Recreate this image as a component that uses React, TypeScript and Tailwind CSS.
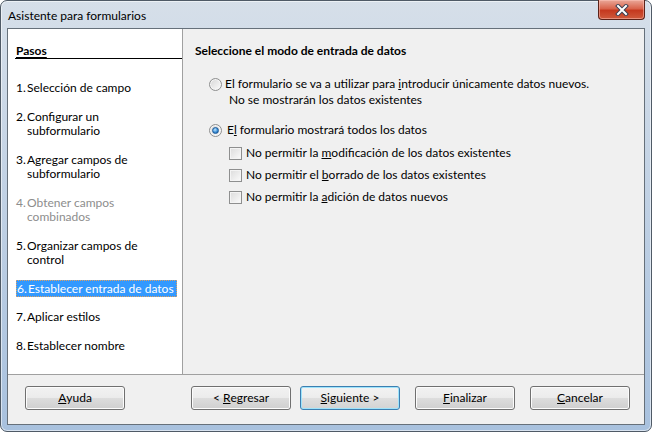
import React from 'react';

const steps = [
  { n: '1.', lines: ['Selección de campo'] },
  { n: '2.', lines: ['Configurar un', 'subformulario'] },
  { n: '3.', lines: ['Agregar campos de', 'subformulario'] },
  { n: '4.', lines: ['Obtener campos', 'combinados'], disabled: true },
  { n: '5.', lines: ['Organizar campos de', 'control'] },
  { n: '6.', lines: ['Establecer entrada de datos'], active: true },
  { n: '7.', lines: ['Aplicar estilos'] },
  { n: '8.', lines: ['Establecer nombre'] },
];

function Radio({ checked }: { checked?: boolean }) {
  return (
    <span className="flex h-[13px] w-[13px] shrink-0 items-center justify-center rounded-full border border-[#8e8f8f] bg-gradient-to-br from-[#d6d6d6] to-[#fdfdfd] shadow-[inset_0_0_0_1px_#f6f6f6]">
      {checked && (
        <span className="h-[7px] w-[7px] rounded-full border border-[#1b5a9a] bg-[radial-gradient(circle_at_40%_35%,#bfe6ff,#3d8fd6_55%,#0f4f93)]" />
      )}
    </span>
  );
}

function Check() {
  return (
    <span className="h-[13px] w-[13px] shrink-0 border border-[#8e8f8f] bg-gradient-to-br from-[#dcdcdc] to-[#fbfbfb] shadow-[inset_0_0_0_1px_#f4f4f4]" />
  );
}

function Btn({ children, primary, ml }: { children: React.ReactNode; primary?: boolean; ml: string }) {
  return (
    <button
      className={`${ml} flex h-[24px] w-[100px] items-center justify-center whitespace-pre rounded-[3px] border text-[12px] leading-[14px] text-black ${
        primary
          ? 'border-[#3c7fb1] bg-[linear-gradient(#f3f3f3,#ececec_50%,#dfdfdf_50%,#d3d3d3)] shadow-[inset_0_0_0_1px_#9ee3fb]'
          : 'border-[#707070] bg-[linear-gradient(#f2f2f2,#ebebeb_50%,#dddddd_50%,#cfcfcf)] shadow-[inset_0_0_0_1px_#fcfcfc]'
      }`}
    >
      {children}
    </button>
  );
}

export default function App() {
  return (
    <div className="flex h-[432px] w-[652px] flex-col rounded-[7px] border border-[#4f5a66] bg-gradient-to-b from-[#d6dfe9] to-[#a8c1de] px-[6px] pb-[6px] font-['Lato',sans-serif] text-[12px] text-black shadow-[inset_0_0_0_1px_rgba(255,255,255,0.55)]">
      {/* Title bar */}
      <div className="flex h-[27px] shrink-0 items-start justify-between">
        <div className="pl-[1px] pt-[7px] leading-[16px]">Asistente para formularios</div>
        <div className="-mt-px flex h-[20px] w-[47px] items-center justify-center rounded-b-[4px] border border-t-0 border-[#5c2218] bg-[linear-gradient(#eaa899,#d9644c_45%,#c5391f_55%,#cf5a3c)] shadow-[inset_0_0_0_1px_rgba(255,200,190,0.5)]">
          <svg width="14" height="12" viewBox="0 0 14 12">
            <path d="M3 2 L11 10 M11 2 L3 10" stroke="#3c3f52" strokeWidth="4" strokeLinecap="square" />
            <path d="M3 2 L11 10 M11 2 L3 10" stroke="#ffffff" strokeWidth="2" strokeLinecap="square" />
          </svg>
        </div>
      </div>

      {/* Client */}
      <div className="flex flex-1 flex-col border border-[#66707a] bg-[#f0f0f0]">
        <div className="flex h-[346px] border-b border-[#a0a0a0]">
          {/* Steps */}
          <div className="w-[175px] border-r border-[#a0a0a0] bg-white pl-[8px] pt-[15px]">
            <div className="-ml-px h-[15px] border-b border-black pl-px font-bold leading-[14px]">
              <span className="underline underline-offset-[2px]">Pasos</span>
            </div>
            <div className="mt-[22px] flex flex-col gap-[14px]">
              {steps.map((s) =>
                s.active ? (
                  <div key={s.n} className="flex">
                    <div className="-mb-px -mt-[2px] flex border border-dotted border-[#e0a060] bg-[#3399ff] pr-[2px] pt-[1px] leading-[14.5px] text-white">
                      <span className="w-[11px] shrink-0">{s.n}</span>
                      <span>{s.lines[0]}</span>
                    </div>
                  </div>
                ) : (
                  <div key={s.n} className={`flex leading-[14.5px] ${s.disabled ? 'text-[#8d8d8d]' : ''}`}>
                    <span className="w-[11px] shrink-0">{s.n}</span>
                    <div>
                      {s.lines.map((l) => (
                        <div key={l}>{l}</div>
                      ))}
                    </div>
                  </div>
                )
              )}
            </div>
          </div>

          {/* Options */}
          <div className="flex-1 pl-[12px] pt-[15px]">
            <div className="h-[14px] font-bold leading-[14px]">Seleccione el modo de entrada de datos</div>
            <div className="ml-[14px] mt-[18px] leading-[16px]">
              <div className="flex h-[16px] items-center gap-[3px]">
                <Radio />
                <span>
                  El formulario se va a utilizar para <u>i</u>ntroducir únicamente datos nuevos.
                </span>
              </div>
              <div className="pl-[20px]">No se mostrarán los datos existentes</div>
            </div>
            <div className="ml-[14px] mt-[14px] flex h-[16px] items-center gap-[5px]">
              <Radio checked />
              <span>
                E<u>l</u> formulario mostrará todos los datos
              </span>
            </div>
            <div className="ml-[34px] mt-[7px] flex flex-col gap-[6px]">
              <div className="flex h-[16px] items-center gap-[4px]">
                <Check />
                <span>
                  No permitir la <u>m</u>odificación de los datos existentes
                </span>
              </div>
              <div className="flex h-[16px] items-center gap-[4px]">
                <Check />
                <span>
                  No permitir el <u>b</u>orrado de los datos existentes
                </span>
              </div>
              <div className="flex h-[16px] items-center gap-[4px]">
                <Check />
                <span>
                  No permitir la <u>a</u>dición de datos nuevos
                </span>
              </div>
            </div>
          </div>
        </div>

        {/* Buttons */}
        <div className="flex flex-1 items-start pt-[11px]">
          <Btn ml="ml-[17px]">
            <u>A</u>yuda
          </Btn>
          <Btn ml="ml-[66px]">
            {'< '}
            <u>R</u>egresar
          </Btn>
          <Btn ml="ml-[9px]" primary>
            <u>S</u>iguiente{' >'}
          </Btn>
          <Btn ml="ml-[15px]">
            <u>F</u>inalizar
          </Btn>
          <Btn ml="ml-[15px]">
            <u>C</u>ancelar
          </Btn>
        </div>
      </div>
    </div>
  );
}
